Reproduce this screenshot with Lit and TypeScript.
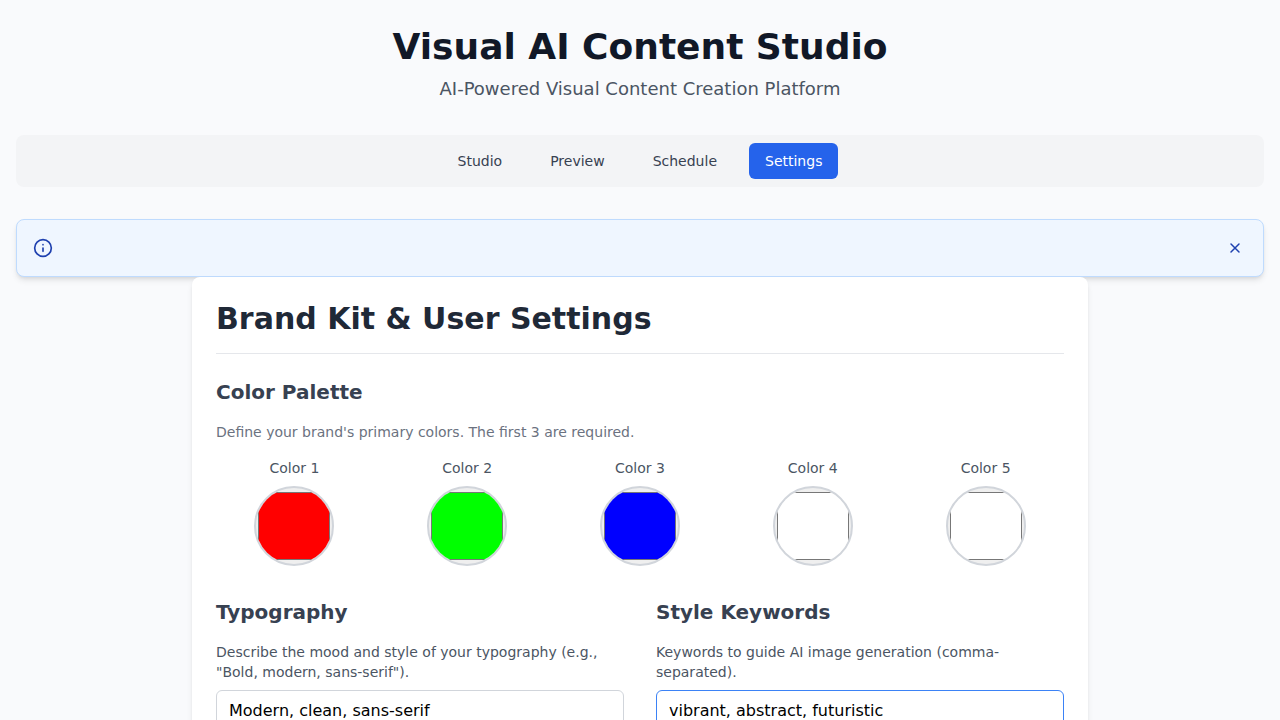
import { LitElement, html, css } from "lit";
import { customElement, state } from "lit/decorators.js";
import { classMap } from "lit/directives/class-map.js";

@customElement("app-root")
export class AppRoot extends LitElement {
  @state() private tab = "Settings";
  @state() private showNotice = true;

  private tabs = ["Studio", "Preview", "Schedule", "Settings"];
  private palette = ["#ff0000", "#00ff00", "#0000ff", "#ffffff", "#ffffff"];

  static styles = css`
    :host {
      display: block;
      box-sizing: border-box;
      min-height: 100vh;
      padding: 24px 16px;
      background: #f9fafc;
      color: #111827;
      font-family: "DejaVu Sans", sans-serif;
      font-size: 16px;
      line-height: 24px;
    }
    *,
    *::before,
    *::after {
      box-sizing: border-box;
    }
    h1,
    h2,
    h3,
    p {
      margin: 0;
    }
    button,
    input {
      font: inherit;
      margin: 0;
    }
    .header {
      text-align: center;
      margin-bottom: 32px;
    }
    .title {
      font-size: 36px;
      line-height: 45px;
      font-weight: 700;
      margin-bottom: 6px;
    }
    .tagline {
      font-size: 18px;
      line-height: 28px;
      color: #4b5563;
    }
    .nav {
      display: flex;
      justify-content: center;
      gap: 16px;
      padding: 8px;
      margin-bottom: 32px;
      border-radius: 8px;
      background: #f3f4f6;
    }
    .tab {
      padding: 8px 16px;
      border: 0;
      border-radius: 6px;
      background: transparent;
      color: #374151;
      font-size: 14px;
      line-height: 20px;
      cursor: pointer;
    }
    .tab.active {
      background: #2563eb;
      color: #fff;
    }
    .notice {
      display: flex;
      align-items: center;
      justify-content: space-between;
      padding: 16px;
      border: 1px solid #bfdbfe;
      border-radius: 8px;
      background: #eff6ff;
      color: #1e40af;
      box-shadow: 0 4px 6px -1px rgba(0, 0, 0, 0.1), 0 2px 4px -2px rgba(0, 0, 0, 0.1);
    }
    .icon {
      display: block;
      fill: none;
      stroke: currentColor;
      stroke-width: 2;
      stroke-linecap: round;
      stroke-linejoin: round;
    }
    .close {
      padding: 4px;
      border: 0;
      border-radius: 4px;
      background: transparent;
      color: inherit;
      cursor: pointer;
    }
    .close .icon {
      stroke-width: 1.5;
    }
    .card {
      position: relative;
      max-width: 896px;
      margin: 0 auto;
      padding: 24px;
      border-radius: 8px;
      background: #fff;
      box-shadow: 0 4px 6px -1px rgba(0, 0, 0, 0.1), 0 2px 4px -2px rgba(0, 0, 0, 0.1);
    }
    .card-title {
      padding-bottom: 16px;
      margin-bottom: 24px;
      border-bottom: 1px solid #e5e7eb;
      color: #1f2937;
      font-size: 30px;
      line-height: 36px;
      font-weight: 700;
    }
    .section-title {
      margin-bottom: 16px;
      color: #374151;
      font-size: 20px;
      line-height: 28px;
      font-weight: 600;
    }
    .hint {
      margin-bottom: 16px;
      color: #6b7280;
      font-size: 14px;
      line-height: 20px;
    }
    .swatches {
      display: grid;
      grid-template-columns: repeat(5, 1fr);
      gap: 16px;
      margin-bottom: 32px;
    }
    .swatch {
      display: flex;
      flex-direction: column;
      align-items: center;
      gap: 8px;
    }
    .label {
      display: block;
      color: #4b5563;
      font-size: 14px;
      line-height: 20px;
    }
    .color {
      width: 80px;
      height: 80px;
      padding: 0;
      border: 2px solid #d1d5db;
      border-radius: 50%;
      cursor: pointer;
    }
    .columns {
      display: grid;
      grid-template-columns: repeat(2, 1fr);
      gap: 32px;
    }
    .field .label {
      margin-bottom: 8px;
    }
    .text {
      display: block;
      width: 100%;
      padding: 8px 12px;
      border: 1px solid #d1d5db;
      border-radius: 6px;
      background: #fff;
      color: #000;
      line-height: 24px;
      outline: none;
    }
    .text.current,
    .text:focus {
      border-color: #3b82f6;
    }
  `;

  render() {
    return html`
      <header class="header">
        <h1 class="title">Visual AI Content Studio</h1>
        <p class="tagline">AI-Powered Visual Content Creation Platform</p>
      </header>
      <nav class="nav">
        ${this.tabs.map(
          (name) => html`<button
            type="button"
            class=${classMap({ tab: true, active: name === this.tab })}
            @click=${() => (this.tab = name)}
          >${name}</button>`
        )}
      </nav>
      ${this.showNotice
        ? html`<div class="notice" role="status">
            <svg class="icon" width="20" height="20" viewBox="0 0 24 24" aria-hidden="true">
              <circle cx="12" cy="12" r="10"></circle>
              <path d="M12 16v-4"></path>
              <path d="M12 8h.01"></path>
            </svg>
            <button
              type="button"
              class="close"
              aria-label="Close"
              @click=${() => (this.showNotice = false)}
            >
              <svg class="icon" width="16" height="16" viewBox="0 0 16 16" aria-hidden="true">
                <path d="M12 4 4 12M4 4l8 8"></path>
              </svg>
            </button>
          </div>`
        : null}
      <main class="card">
        <h2 class="card-title">Brand Kit &amp; User Settings</h2>
        <section>
          <h3 class="section-title">Color Palette</h3>
          <p class="hint">Define your brand's primary colors. The first 3 are required.</p>
          <div class="swatches">
            ${this.palette.map(
              (value, i) => html`<div class="swatch">
                <label class="label" for="color-${i + 1}">Color ${i + 1}</label>
                <input class="color" id="color-${i + 1}" type="color" .value=${value} />
              </div>`
            )}
          </div>
        </section>
        <div class="columns">
          <section class="field">
            <h3 class="section-title">Typography</h3>
            <label class="label" for="typography"
              >Describe the mood and style of your typography (e.g., "Bold, modern,
              sans-serif").</label
            >
            <input class="text" id="typography" type="text" value="Modern, clean, sans-serif" />
          </section>
          <section class="field">
            <h3 class="section-title">Style Keywords</h3>
            <label class="label" for="keywords"
              >Keywords to guide AI image generation (comma-separated).</label
            >
            <input class="text current" id="keywords" type="text" value="vibrant, abstract, futuristic" />
          </section>
        </div>
      </main>
    `;
  }
}
